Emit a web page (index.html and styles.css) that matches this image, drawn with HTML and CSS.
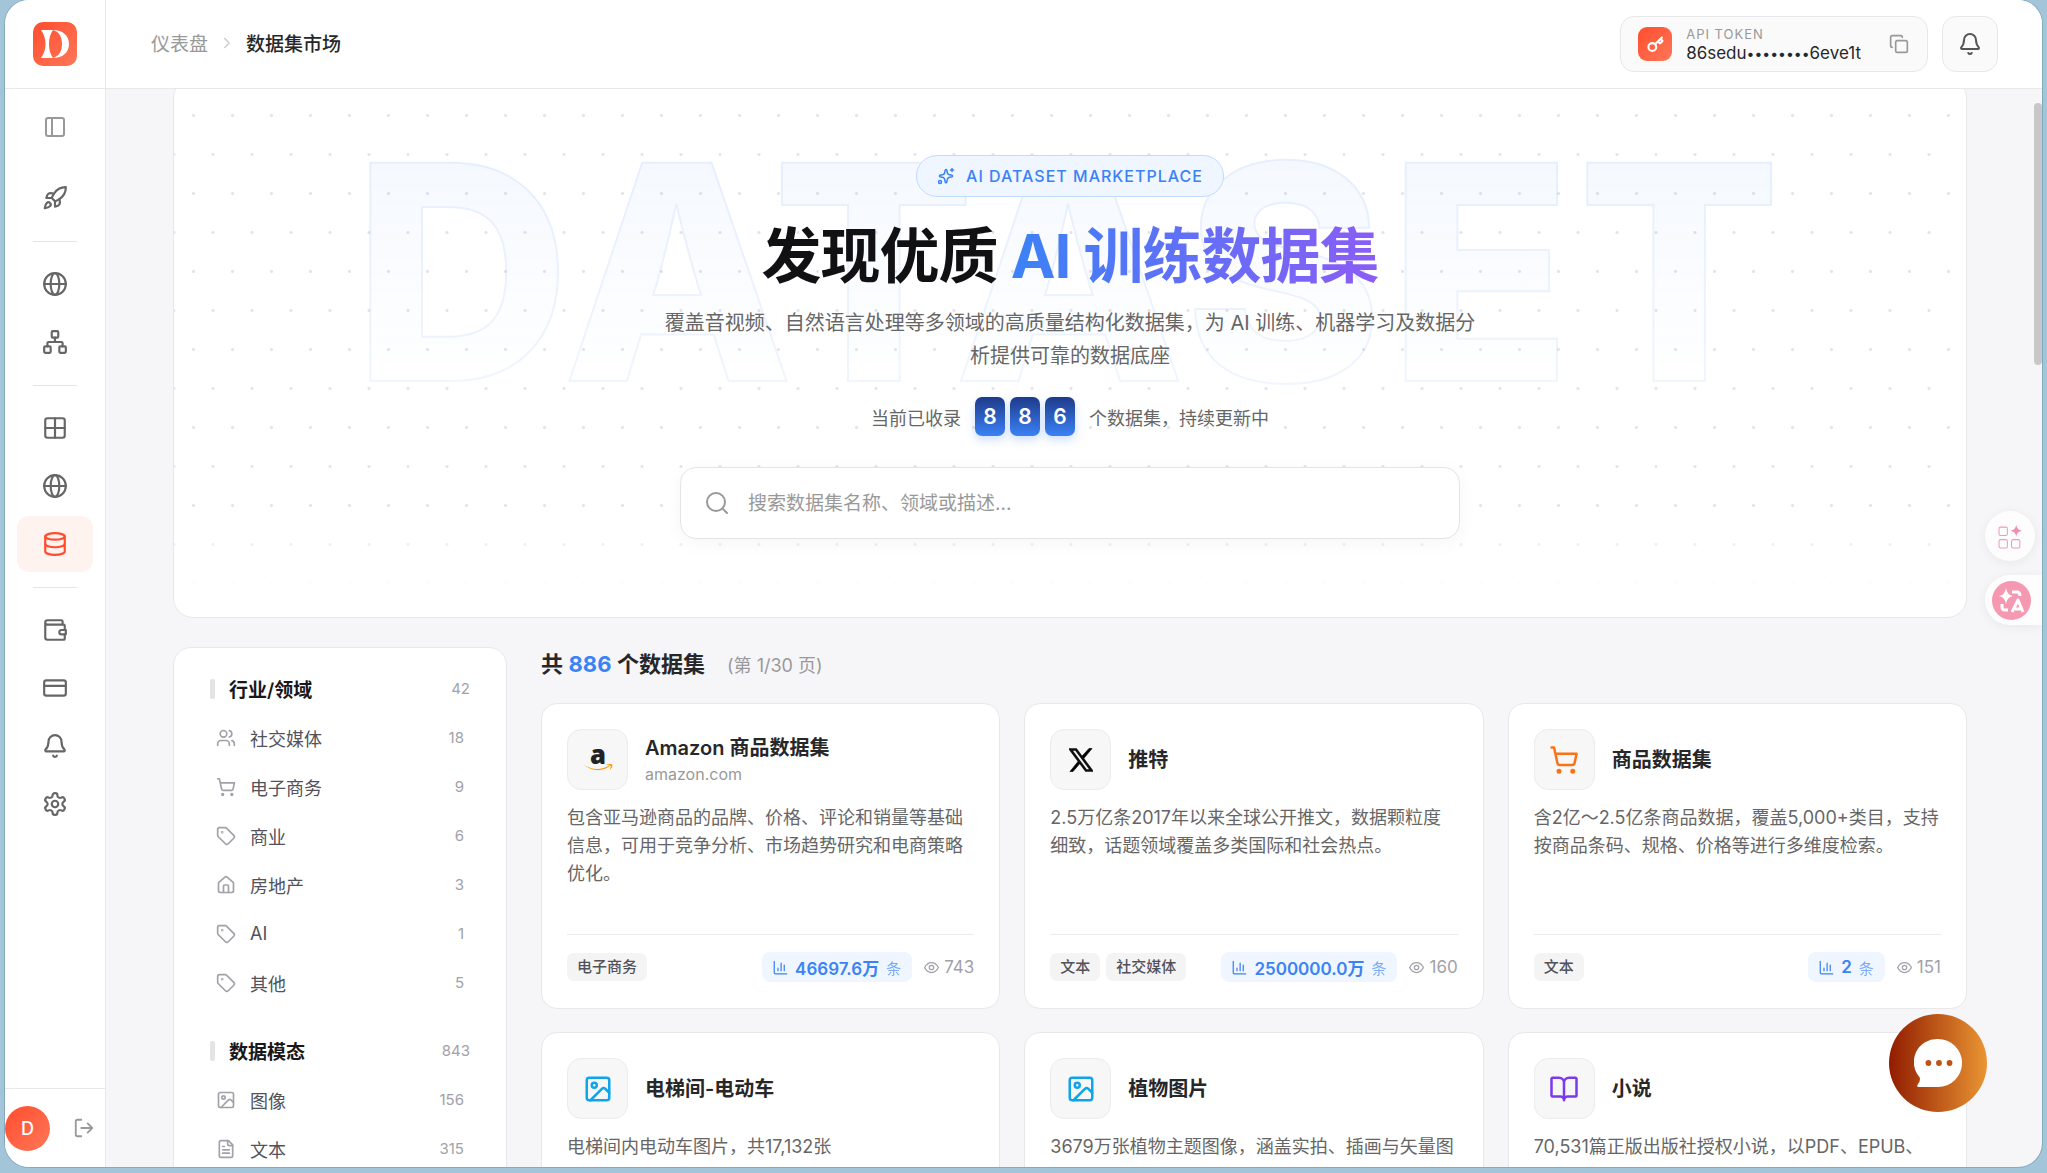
FILE: index.html
```html
<!DOCTYPE html>
<html lang="zh-CN">
<head>
<meta charset="utf-8">
<meta name="viewport" content="width=device-width, initial-scale=1">
<title>数据集市场</title>
<link rel="stylesheet" href="styles.css">
</head>
<body>
<svg class="sprite" aria-hidden="true">
  <symbol id="i-panel" viewBox="0 0 24 24"><rect x="3" y="3" width="18" height="18" rx="2"/><path d="M9 3v18"/></symbol>
  <symbol id="i-rocket" viewBox="0 0 24 24"><path d="M4.500 16.500c-1.500 1.260-2 5-2 5s3.740-.5 5-2c.71-.84.7-2.130-.09-2.910a2.180 2.180 0 0 0-2.910-.09z"/><path d="m12 15-3-3a22 22 0 0 1 2-3.950A12.880 12.880 0 0 1 22 2c0 2.720-.78 7.500-6 11a22.350 22.350 0 0 1-4 2z"/><path d="M9 12H4s.55-3.030 2-4c1.620-1.080 5 0 5 0"/><path d="M12 15v5s3.030-.55 4-2c1.080-1.620 0-5 0-5"/></symbol>
  <symbol id="i-globe" viewBox="0 0 24 24"><circle cx="12" cy="12" r="10"/><ellipse cx="12" cy="12" rx="4" ry="10"/><path d="M2 12h20"/></symbol>
  <symbol id="i-network" viewBox="0 0 24 24"><rect x="16" y="16" width="6" height="6" rx="1"/><rect x="2" y="16" width="6" height="6" rx="1"/><rect x="9" y="2" width="6" height="6" rx="1"/><path d="M5 16v-3a1 1 0 0 1 1-1h12a1 1 0 0 1 1 1v3M12 12V8"/></symbol>
  <symbol id="i-grid" viewBox="0 0 24 24"><rect x="3" y="3" width="18" height="18" rx="2"/><path d="M3 12h18M12 3v18"/></symbol>
  <symbol id="i-db" viewBox="0 0 24 24"><ellipse cx="12" cy="5" rx="9" ry="3"/><path d="M3 5v14a9 3 0 0 0 18 0V5"/><path d="M3 12a9 3 0 0 0 18 0"/></symbol>
  <symbol id="i-wallet" viewBox="0 0 24 24"><path d="M19 7V4a1 1 0 0 0-1-1H5a2 2 0 0 0 0 4h15a1 1 0 0 1 1 1v4M21 16v4a1 1 0 0 1-1 1H5a2 2 0 0 1-2-2V5"/><path d="M22 12h-4a2 2 0 0 0 0 4h4z"/></symbol>
  <symbol id="i-card" viewBox="0 0 24 24"><rect x="2" y="5" width="20" height="14" rx="2"/><path d="M2 10h20"/></symbol>
  <symbol id="i-bell" viewBox="0 0 24 24"><path d="M10.300 21a1.940 1.940 0 0 0 3.400 0"/><path d="M3.262 15.326A1 1 0 0 0 4 17h16a1 1 0 0 0 .74-1.673C19.410 13.956 18 12.499 18 8A6 6 0 0 0 6 8c0 4.499-1.411 5.956-2.738 7.326"/></symbol>
  <symbol id="i-gear" viewBox="0 0 24 24"><path d="M12.220 2h-.44a2 2 0 0 0-2 2v.18a2 2 0 0 1-1 1.730l-.43.25a2 2 0 0 1-2 0l-.15-.08a2 2 0 0 0-2.730.73l-.22.38a2 2 0 0 0 .73 2.730l.15.1a2 2 0 0 1 1 1.720v.51a2 2 0 0 1-1 1.740l-.15.09a2 2 0 0 0-.73 2.730l.22.38a2 2 0 0 0 2.730.73l.15-.08a2 2 0 0 1 2 0l.43.25a2 2 0 0 1 1 1.730V20a2 2 0 0 0 2 2h.44a2 2 0 0 0 2-2v-.18a2 2 0 0 1 1-1.730l.43-.25a2 2 0 0 1 2 0l.15.08a2 2 0 0 0 2.730-.73l.22-.39a2 2 0 0 0-.73-2.730l-.15-.08a2 2 0 0 1-1-1.740v-.5a2 2 0 0 1 1-1.740l.15-.09a2 2 0 0 0 .73-2.730l-.22-.38a2 2 0 0 0-2.730-.73l-.15.08a2 2 0 0 1-2 0l-.43-.25a2 2 0 0 1-1-1.730V4a2 2 0 0 0-2-2z"/><circle cx="12" cy="12" r="3"/></symbol>
  <symbol id="i-logout" viewBox="0 0 24 24"><path d="M9 21H5a2 2 0 0 1-2-2V5a2 2 0 0 1 2-2h4M16 17l5-5-5-5M21 12H9"/></symbol>
  <symbol id="i-chevron" viewBox="0 0 24 24"><path d="m9 18 6-6-6-6"/></symbol>
  <symbol id="i-key" viewBox="0 0 24 24"><circle cx="7.500" cy="15.500" r="5.500"/><path d="m21 2-9.600 9.600M15.500 7.500l2.300 2.300a1 1 0 0 0 1.400 0l2.100-2.100a1 1 0 0 0 0-1.400L19 4"/></symbol>
  <symbol id="i-copy" viewBox="0 0 24 24"><rect x="8" y="8" width="14" height="14" rx="2"/><path d="M4 16c-1.100 0-2-.9-2-2V4c0-1.100.9-2 2-2h10c1.100 0 2 .9 2 2"/></symbol>
  <symbol id="i-spark" viewBox="0 0 24 24"><path d="M11 4.200a1 1 0 0 1 2 0l1 4.300a3 3 0 0 0 1.800 1.600l4.200 1a1 1 0 0 1 0 1.900l-4.200 1.100a3 3 0 0 0-1.800 1.700l-1 4.200a1 1 0 0 1-2 0l-1-4.200a3 3 0 0 0-1.800-1.700L4 13a1 1 0 0 1 0-1.900l4.200-1A3 3 0 0 0 10 8.500zM20 2v4M22 4h-4"/><circle cx="4" cy="20" r="2"/></symbol>
  <symbol id="i-search" viewBox="0 0 24 24"><circle cx="11" cy="11" r="9"/><path d="m22 22-4.600-4.600"/></symbol>
  <symbol id="i-users" viewBox="0 0 24 24"><path d="M16 21v-2a4 4 0 0 0-4-4H6a4 4 0 0 0-4 4v2"/><circle cx="9" cy="7" r="4"/><path d="M22 21v-2a4 4 0 0 0-3-3.870M16 3.130a4 4 0 0 1 0 7.750"/></symbol>
  <symbol id="i-cart" viewBox="0 0 24 24"><circle cx="8" cy="21" r="1"/><circle cx="19" cy="21" r="1"/><path d="M2.050 2.050h2l2.660 12.420a2 2 0 0 0 2 1.580h9.780a2 2 0 0 0 1.950-1.570l1.650-7.430H5.120"/></symbol>
  <symbol id="i-tag" viewBox="0 0 24 24"><path d="M12.586 2.586A2 2 0 0 0 11.172 2H4a2 2 0 0 0-2 2v7.172a2 2 0 0 0 .586 1.414l8.704 8.704a2.426 2.426 0 0 0 3.420 0l6.580-6.580a2.426 2.426 0 0 0 0-3.420z"/><circle cx="7.500" cy="7.500" r=".5"/></symbol>
  <symbol id="i-home" viewBox="0 0 24 24"><path d="M15 21v-8a1 1 0 0 0-1-1h-4a1 1 0 0 0-1 1v8"/><path d="M3 10a2 2 0 0 1 .709-1.528l7-5.999a2 2 0 0 1 2.582 0l7 5.999A2 2 0 0 1 21 10v9a2 2 0 0 1-2 2H5a2 2 0 0 1-2-2z"/></symbol>
  <symbol id="i-image" viewBox="0 0 24 24"><rect x="3" y="3" width="18" height="18" rx="2"/><circle cx="9" cy="9" r="2"/><path d="m21 15-3.086-3.086a2 2 0 0 0-2.828 0L6 21"/></symbol>
  <symbol id="i-file" viewBox="0 0 24 24"><path d="M15 2H6a2 2 0 0 0-2 2v16a2 2 0 0 0 2 2h12a2 2 0 0 0 2-2V7z"/><path d="M14 2v4a2 2 0 0 0 2 2h4M10 9H8M16 13H8M16 17H8"/></symbol>
  <symbol id="i-book" viewBox="0 0 24 24"><path d="M12 7v14M3 18a1 1 0 0 1-1-1V4a1 1 0 0 1 1-1h5a4 4 0 0 1 4 4 4 4 0 0 1 4-4h5a1 1 0 0 1 1 1v13a1 1 0 0 1-1 1h-6a3 3 0 0 0-3 3 3 3 0 0 0-3-3z"/></symbol>
  <symbol id="i-chart" viewBox="0 0 24 24"><path d="M2 2v18a2 2 0 0 0 2 2h18M18 17V8M13 17V5M8 17v-4"/></symbol>
  <symbol id="i-eye" viewBox="0 0 24 24"><path d="M1 12s4-8 11-8 11 8 11 8-4 8-11 8S1 12 1 12z"/><circle cx="12" cy="12" r="3.500"/></symbol>
</svg>

<div class="window">
  <aside class="sidebar">
    <a class="brand" href="#" aria-label="首页">
      <svg viewBox="0 0 44 44"><path fill="#fff" d="M8 8h12c-3 4-4 9-4 14s1 10 4 14H8c3-4 4.500-9 4.500-14S11 12 8 8z"/><path fill="#fff" d="M20 8c10 0 16 6 16 14s-6 14-16 14c7-2 9-8 9-14s-2-12-9-14z"/></svg>
    </a>
    <button class="collapse" type="button" aria-label="收起侧栏"><svg class="icon"><use href="#i-panel"/></svg></button>
    <nav class="nav" aria-label="主导航">
      <a href="#" aria-label="快速开始"><svg class="icon"><use href="#i-rocket"/></svg></a>
      <hr>
      <a href="#" aria-label="网络"><svg class="icon"><use href="#i-globe"/></svg></a>
      <a href="#" aria-label="节点"><svg class="icon"><use href="#i-network"/></svg></a>
      <hr>
      <a href="#" aria-label="应用"><svg class="icon"><use href="#i-grid"/></svg></a>
      <a href="#" aria-label="浏览"><svg class="icon"><use href="#i-globe"/></svg></a>
      <a class="active" href="#" aria-label="数据集市场" aria-current="page"><svg class="icon"><use href="#i-db"/></svg></a>
      <hr>
      <a href="#" aria-label="钱包"><svg class="icon"><use href="#i-wallet"/></svg></a>
      <a href="#" aria-label="账单"><svg class="icon"><use href="#i-card"/></svg></a>
      <a href="#" aria-label="通知"><svg class="icon"><use href="#i-bell"/></svg></a>
      <a href="#" aria-label="设置"><svg class="icon"><use href="#i-gear"/></svg></a>
    </nav>
    <div class="account">
      <span class="avatar">D</span>
      <button type="button" aria-label="退出登录"><svg class="icon"><use href="#i-logout"/></svg></button>
    </div>
  </aside>

  <div class="page">
    <header class="topbar">
      <nav class="crumbs" aria-label="面包屑">
        <a href="#">仪表盘</a>
        <svg class="icon"><use href="#i-chevron"/></svg>
        <span>数据集市场</span>
      </nav>
      <div class="token">
        <span class="token-key"><svg class="icon"><use href="#i-key"/></svg></span>
        <span class="token-text"><small>API TOKEN</small><b>86sedu<i>••••••••</i>6eve1t</b></span>
        <button type="button" aria-label="复制"><svg class="icon"><use href="#i-copy"/></svg></button>
      </div>
      <button class="bell" type="button" aria-label="通知"><svg class="icon"><use href="#i-bell"/></svg></button>
    </header>

    <main class="content">
      <section class="hero">
        <div class="watermark" aria-hidden="true">DATASET</div>
        <p class="pill"><svg class="icon"><use href="#i-spark"/></svg>AI DATASET MARKETPLACE</p>
        <h1>发现优质 <em>AI 训练数据集</em></h1>
        <p class="lead">覆盖音视频、自然语言处理等多领域的高质量结构化数据集，为 AI 训练、机器学习及数据分析提供可靠的数据底座</p>
        <p class="counter">当前已收录 <span class="digits"><b>8</b><b>8</b><b>6</b></span> 个数据集，持续更新中</p>
        <label class="search">
          <svg class="icon"><use href="#i-search"/></svg>
          <input type="search" placeholder="搜索数据集名称、领域或描述..." aria-label="搜索数据集">
        </label>
      </section>

      <div class="market">
        <aside class="filters">
          <section>
            <h2>行业/领域<span>42</span></h2>
            <button type="button"><svg class="icon"><use href="#i-users"/></svg>社交媒体<span>18</span></button>
            <button type="button"><svg class="icon"><use href="#i-cart"/></svg>电子商务<span>9</span></button>
            <button type="button"><svg class="icon"><use href="#i-tag"/></svg>商业<span>6</span></button>
            <button type="button"><svg class="icon"><use href="#i-home"/></svg>房地产<span>3</span></button>
            <button type="button"><svg class="icon"><use href="#i-tag"/></svg>AI<span>1</span></button>
            <button type="button"><svg class="icon"><use href="#i-tag"/></svg>其他<span>5</span></button>
          </section>
          <section>
            <h2>数据模态<span>843</span></h2>
            <button type="button"><svg class="icon"><use href="#i-image"/></svg>图像<span>156</span></button>
            <button type="button"><svg class="icon"><use href="#i-file"/></svg>文本<span>315</span></button>
          </section>
        </aside>

        <section class="results">
          <h2>共 <em>886</em> 个数据集<small>(第 1/30 页)</small></h2>
          <div class="cards">
            <article class="card">
              <header>
                <span class="thumb"><svg class="amazon" viewBox="0 0 28 28"><text x="14" y="18" text-anchor="middle">a</text><path d="M1 19q13 7 24-.3.900-.3.700.5Q14 28 1 19z"/><path d="M22 18.200q4-1 5.500-.1.300 2.500-2 4.700-.5-.1-.3-.7 1.200-2 .7-3-1.200-.6-3.800-.3z"/></svg></span>
                <div><h3>Amazon 商品数据集</h3><p>amazon.com</p></div>
              </header>
              <p class="desc">包含亚马逊商品的品牌、价格、评论和销量等基础信息，可用于竞争分析、市场趋势研究和电商策略优化。</p>
              <footer><span class="tag">电子商务</span><span class="rows"><svg class="icon"><use href="#i-chart"/></svg><b>46697.6万</b><small>条</small></span><span class="views"><svg class="icon"><use href="#i-eye"/></svg>743</span></footer>
            </article>
            <article class="card">
              <header>
                <span class="thumb"><svg class="x-mark" viewBox="0 0 24 24"><path d="M1.500 1.500h5.500l15.500 21h-5.500z" fill="none" stroke="currentColor" stroke-width="2.600"/><path d="M20 .5h3L14.300 11l-1.700-2.300zM1 23.500h3L11 15.300l-1.600-2.200z" stroke="currentColor" stroke-width=".8"/></svg></span>
                <div><h3>推特</h3></div>
              </header>
              <p class="desc">2.5万亿条2017年以来全球公开推文，数据颗粒度细致，话题领域覆盖多类国际和社会热点。</p>
              <footer><span class="tag">文本</span><span class="tag">社交媒体</span><span class="rows"><svg class="icon"><use href="#i-chart"/></svg><b>2500000.0万</b><small>条</small></span><span class="views"><svg class="icon"><use href="#i-eye"/></svg>160</span></footer>
            </article>
            <article class="card">
              <header>
                <span class="thumb orange"><svg class="icon"><use href="#i-cart"/></svg></span>
                <div><h3>商品数据集</h3></div>
              </header>
              <p class="desc">含2亿～2.5亿条商品数据，覆盖5,000+类目，支持按商品条码、规格、价格等进行多维度检索。</p>
              <footer><span class="tag">文本</span><span class="rows"><svg class="icon"><use href="#i-chart"/></svg><b>2</b><small>条</small></span><span class="views"><svg class="icon"><use href="#i-eye"/></svg>151</span></footer>
            </article>
            <article class="card">
              <header>
                <span class="thumb sky"><svg class="icon"><use href="#i-image"/></svg></span>
                <div><h3>电梯间-电动车</h3></div>
              </header>
              <p class="desc">电梯间内电动车图片，共17,132张</p>
            </article>
            <article class="card">
              <header>
                <span class="thumb sky"><svg class="icon"><use href="#i-image"/></svg></span>
                <div><h3>植物图片</h3></div>
              </header>
              <p class="desc">3679万张植物主题图像，涵盖实拍、插画与矢量图</p>
            </article>
            <article class="card">
              <header>
                <span class="thumb violet"><svg class="icon"><use href="#i-book"/></svg></span>
                <div><h3>小说</h3></div>
              </header>
              <p class="desc">70,531篇正版出版社授权小说，以PDF、EPUB、</p>
            </article>
          </div>
        </section>
      </div>
    </main>
  </div>

  <div class="scroll-thumb"></div>
  <div class="assist">
    <button class="assist-apps" type="button" aria-label="小工具"><svg viewBox="0 0 24 24"><rect x="1" y="3" width="8" height="8" rx="1.500"/><rect x="1" y="15" width="8" height="8" rx="1.500"/><rect x="13" y="15" width="8" height="8" rx="1.500"/><path class="solid" d="M17.500 1q.8 4.700 5.500 5.500-4.700.8-5.500 5.500-.8-4.700-5.500-5.500 4.700-.8 5.500-5.500z"/></svg></button>
    <button class="assist-translate" type="button" aria-label="翻译"><svg viewBox="0 0 39 39"><circle cx="19.500" cy="19.500" r="19.500"/><path class="white" d="M14 7q1 7 7 8-6 1-7 8-1-7-7-8 6-1 7-8z"/><path class="line" d="M20 11h5q3 0 3 4M10 23v3q0 3 3 3h3M20 31l6-12 5 12M23 28h6"/></svg></button>
  </div>
  <button class="chat" type="button" aria-label="在线客服"><svg viewBox="0 0 48 52"><path d="M24 1a24 24 0 0 1 0 50H3q-1-1 0-3 3-3 2-7A24 24 0 0 1 24 1z" fill="#fff"/><g fill="#bd5318"><circle cx="14" cy="26" r="3"/><circle cx="25" cy="26" r="3"/><circle cx="36" cy="26" r="3"/></g></svg></button>
</div>
</body>
</html>
```
FILE: styles.css
```css
* { box-sizing: border-box; }

body {
  margin: 0;
  height: 100vh;
  padding: 0 5px 6px;
  background: #a3c5da;
  color: #27272a;
  font-family: Inter, "Noto Sans CJK SC", sans-serif;
  font-size: 18px;
}

h1, h2, h3, p { margin: 0; }
a { color: inherit; text-decoration: none; }
em, i { font-style: normal; }
button { border: 0; padding: 0; background: none; color: inherit; font: inherit; display: flex; align-items: center; justify-content: center; }
.sprite { display: none; }
.icon { width: 24px; height: 24px; flex: none; display: block; fill: none; stroke: currentColor; stroke-width: 2; stroke-linecap: round; stroke-linejoin: round; }

.window {
  position: relative;
  display: flex;
  height: 100%;
  overflow: hidden;
  border-radius: 24px;
  background: #f6f6f9;
  box-shadow: 0 0 0 1px #86a9bd;
}

/* Sidebar */
.sidebar { flex: none; width: 101px; display: flex; flex-direction: column; background: #fff; border-right: 1px solid #e8e8ea; color: #666; }
.brand { height: 89px; display: flex; align-items: center; justify-content: center; border-bottom: 1px solid #e8e8ea; }
.brand svg { width: 44px; height: 44px; border-radius: 10px; background: linear-gradient(135deg, #ff4d2e, #ff7759); }
.collapse { height: 76px; color: #999; }
.nav { flex: 1; display: flex; flex-direction: column; gap: 2px; padding: 5px 12px 0; }
.nav a { height: 56px; display: flex; align-items: center; justify-content: center; border-radius: 12px; }
.nav .icon { width: 26px; height: 26px; }
.nav .active { background: #fff3f0; color: #ff4d2e; }
.nav hr { width: 44px; height: 1px; margin: 13px auto 12px; border: 0; background: #e5e5e7; }
.account { height: 79px; display: flex; align-items: center; justify-content: space-between; padding-right: 10px; border-top: 1px solid #e8e8ea; color: #999; }
.avatar { width: 45px; height: 45px; border-radius: 50%; display: flex; align-items: center; justify-content: center; background: linear-gradient(135deg, #ff4d2e, #ff7759); color: #fff; font-weight: 500; }
.account .icon { width: 22px; height: 22px; }

/* Top bar */
.page { flex: 1; min-width: 0; display: flex; flex-direction: column; }
.topbar { flex: none; height: 89px; display: flex; align-items: center; gap: 14px; padding: 0 44px 0 45px; background: #fff; border-bottom: 1px solid #e8e8ea; }
.crumbs { flex: 1; display: flex; align-items: center; gap: 10px; padding-bottom: 3px; font-size: 19px; font-weight: 500; }
.crumbs a { color: #999; font-weight: 400; }
.crumbs .icon { width: 18px; height: 18px; color: #ccc; }
.token { height: 56px; display: flex; align-items: center; padding: 0 18px 0 17px; border: 1px solid #e8e8ea; border-radius: 14px; background: #fafafa; }
.token-key { width: 34px; height: 34px; display: flex; align-items: center; justify-content: center; border-radius: 9px; background: linear-gradient(135deg, #ff4d2e, #ff7759); color: #fff; }
.token-key .icon { width: 17px; height: 17px; stroke-width: 3; }
.token-text { display: flex; flex-direction: column; margin: 0 28px 0 14px; }
.token-text small { color: #999; font-size: 13px; line-height: 18px; letter-spacing: 1px; }
.token-text b { font-size: 17px; line-height: 20px; font-weight: 400; }
.token-text i { font-size: 14px; }
.token button { color: #999; }
.token button .icon { width: 20px; height: 20px; }
.bell { width: 56px; height: 56px; border: 1px solid #e8e8ea; border-radius: 14px; background: #fafafa; color: #555; }

/* Hero */
.content { flex: 1; min-height: 0; overflow: hidden; padding: 0 75px 0 67px; }
.hero {
  position: relative;
  isolation: isolate;
  display: flex;
  flex-direction: column;
  align-items: center;
  margin-top: -11px;
  padding: 76px 24px 78px;
  overflow: hidden;
  border: 1px solid #e8e8ea;
  border-radius: 20px;
  background:
    linear-gradient(to top, #fff 24px, transparent 110px),
    radial-gradient(circle at 50% 25%, #e3e4ea 1px, transparent 2px) 0 17px / 39px 78px,
    radial-gradient(circle at 0 75%, #e3e4ea 1px, transparent 2px) 0 17px / 39px 78px,
    radial-gradient(circle at 100% 75%, #e3e4ea 1px, transparent 2px) 0 17px / 39px 78px,
    #fff;
}
.watermark {
  position: absolute;
  z-index: -1;
  inset: 11px 0 auto;
  text-align: center;
  white-space: nowrap;
  font-size: 300px;
  line-height: 364px;
  font-weight: 800;
  letter-spacing: 6px;
  color: transparent;
  background: linear-gradient(rgba(59, 130, 246, .05) 20%, rgba(59, 130, 246, 0) 82%);
  background-clip: text;
  -webkit-text-stroke: 2px rgba(59, 130, 246, .08);
}
.pill { display: flex; align-items: center; gap: 11px; height: 42px; padding: 0 20px; border: 1px solid #bfdbfe; border-radius: 21px; background: #eff6ff; color: #3b82f6; font-size: 16px; font-weight: 500; letter-spacing: 1px; }
.pill .icon { width: 18px; height: 18px; }
.hero h1 { margin-top: 17px; font-size: 60px; line-height: 84px; font-weight: 700; letter-spacing: -1px; color: #111114; white-space: nowrap; }
.hero h1 em { color: transparent; background: linear-gradient(90deg, #3b82f6, #8b5cf6); background-clip: text; }
.lead { width: 824px; max-width: 100%; margin-top: 9px; font-size: 20px; line-height: 33px; text-align: center; color: #666; }
.counter { display: flex; align-items: center; gap: 14px; margin-top: 24px; color: #666; font-size: 18px; }
.digits { display: flex; gap: 5px; }
.digits b { width: 30px; height: 39px; display: flex; align-items: center; justify-content: center; border-radius: 7px; background: linear-gradient(#1e3a8a, #3b82f6); box-shadow: 0 4px 10px rgba(59, 130, 246, .25); color: #fff; font-size: 21px; font-weight: 600; }
.search { width: 780px; max-width: 100%; height: 72px; display: flex; align-items: center; gap: 17px; margin-top: 31px; padding: 0 24px; border: 1px solid #e5e5e7; border-radius: 16px; background: #fff; box-shadow: 0 4px 20px rgba(0, 0, 0, .04); color: #999; }
.search input { flex: 1; min-width: 0; border: 0; outline: 0; background: none; color: #27272a; font: inherit; font-size: 19px; }
.search input::placeholder { color: #999; }

/* Filters */
.market { display: flex; align-items: flex-start; gap: 34px; margin-top: 29px; }
.filters { flex: none; width: 334px; padding: 16px 36px 40px; border: 1px solid #e8e8ea; border-radius: 18px; background: #fff; }
.filters section { margin-bottom: 19px; }
.filters h2, .filters button { width: 100%; height: 49px; display: flex; align-items: center; }
.filters h2 { font-size: 19px; font-weight: 600; color: #18181b; }
.filters h2::before { content: ""; width: 5px; height: 20px; margin-right: 14px; border-radius: 2px; background: #e4e4e7; }
.filters button { padding: 0 6px; gap: 14px; color: #52525b; }
.filters span { margin-left: auto; color: #a1a1aa; font-size: 15px; font-weight: 400; }
.filters .icon { width: 20px; height: 20px; color: #a1a1aa; }

/* Results */
.results { flex: 1; min-width: 0; }
.results h2 { font-size: 22px; line-height: 34px; font-weight: 600; }
.results h2 em { color: #3b82f6; font-weight: 700; }
.results h2 small { margin-left: 22px; color: #999; font-size: 18px; font-weight: 400; }
.cards { display: grid; grid-template-columns: repeat(3, minmax(0, 1fr)); gap: 23px 24px; margin-top: 20px; }
.card { min-height: 306px; display: flex; flex-direction: column; padding: 25px 25px 26px; border: 1px solid #e8e8ea; border-radius: 16px; background: #fff; }
.card header { display: flex; align-items: center; gap: 17px; }
.thumb { width: 61px; height: 61px; flex: none; display: flex; align-items: center; justify-content: center; border: 1px solid #ececee; border-radius: 14px; background: #f7f7f8; color: #111; }
.thumb .icon { width: 30px; height: 30px; }
.orange { color: #f97316; }
.sky { color: #0ea5e9; }
.violet { color: #7c3aed; }
.amazon { width: 30px; height: 30px; fill: #ff9900; }
.amazon text { fill: #222; font: 800 24px "Open Sans", sans-serif; }
.x-mark { width: 24px; height: 24px; }
.card h3 { font-size: 20px; line-height: 28px; font-weight: 600; }
.card header p { color: #999; font-size: 16px; line-height: 24px; }
.desc { flex: 1; margin-top: 14px; color: #666; font-size: 18px; line-height: 28px; }
.card footer { display: flex; align-items: center; gap: 6px; padding-top: 17px; border-top: 1px solid #ebebed; }
.tag { height: 28px; padding: 0 10px; border-radius: 7px; background: #f4f4f5; color: #52525b; font-size: 15px; line-height: 28px; font-weight: 500; }
.rows { height: 30px; display: flex; align-items: center; gap: 7px; margin-left: auto; padding: 0 11px; border-radius: 8px; background: #eff6ff; color: #3b82f6; }
.rows b { font-size: 17px; font-weight: 600; }
.rows small { font-size: 15px; opacity: .65; }
.rows .icon { width: 15px; height: 15px; }
.views { display: flex; align-items: center; gap: 5px; margin-left: 6px; color: #a1a1aa; font-size: 17px; }
.views .icon { width: 15px; height: 15px; }

/* Overlays */
.scroll-thumb { position: absolute; top: 103px; right: 0; width: 8px; height: 262px; border-radius: 4px; background: #c8c8c9; }
.assist { position: absolute; top: 511px; right: 0; display: flex; flex-direction: column; gap: 14px; }
.assist button { height: 50px; background: #fdfdfe; box-shadow: 0 2px 12px rgba(0, 0, 0, .06); }
.assist-apps { width: 50px; margin-right: 7px; border-radius: 50%; }
.assist-apps svg { width: 25px; height: 25px; fill: none; stroke: #f59ab2; stroke-width: 1; }
.assist-apps .solid { fill: #f48fab; stroke: none; }
.assist-translate { width: 57px; border-radius: 25px 0 0 25px; }
.assist-translate svg { width: 39px; height: 39px; margin-right: 4px; fill: #f598b1; }
.assist-translate .white { fill: #fff; }
.assist-translate .line { fill: none; stroke: #fff; stroke-width: 3; stroke-linejoin: round; }
.chat { position: absolute; right: 55px; bottom: 55px; width: 98px; height: 98px; border-radius: 50%; background: linear-gradient(90deg, #911c00, #ea9533); }
.chat svg { width: 48px; height: 50px; }
```
